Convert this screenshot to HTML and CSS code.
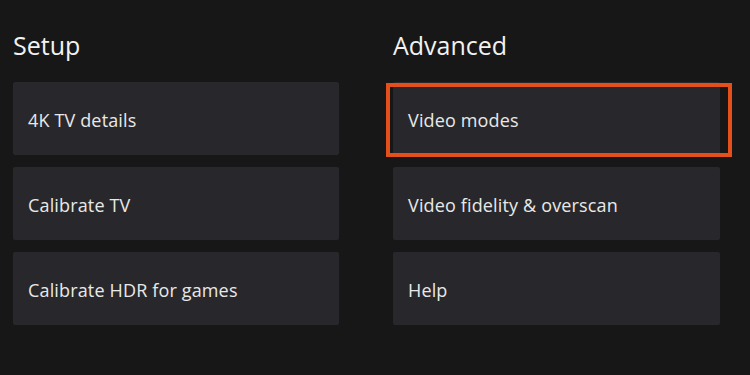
FILE: index.html
```html
<!DOCTYPE html>
<html>
<head>
<meta charset="utf-8">
<link rel="stylesheet" href="styles.css">
</head>
<body>
<main class="settings">
  <section class="column">
    <h2 class="heading">Setup</h2>
    <div class="tiles">
      <div class="tile">4K TV details</div>
      <div class="tile">Calibrate TV</div>
      <div class="tile">Calibrate HDR for games</div>
    </div>
  </section>
  <section class="column">
    <h2 class="heading">Advanced</h2>
    <div class="tiles">
      <div class="tile selected">Video modes<span class="highlight"></span></div>
      <div class="tile">Video fidelity &amp; overscan</div>
      <div class="tile">Help</div>
    </div>
  </section>
</main>
</body>
</html>
```
FILE: styles.css
```css
html, body {
  margin: 0;
  padding: 0;
  background: #171717;
  width: 750px;
  height: 375px;
  overflow: hidden;
}
.settings {
  display: grid;
  grid-template-columns: 326px 327px;
  column-gap: 54px;
  padding: 0 0 0 13px;
  font-family: "Open Sans", "Noto Sans", sans-serif;
  color: #ececec;
}
.heading {
  margin: 0;
  height: 82px;
  box-sizing: border-box;
  padding-top: 28px;
  font-size: 25px;
  line-height: 35px;
  font-weight: 400;
  color: #f2f2f2;
}
.tiles {
  display: flex;
  flex-direction: column;
  gap: 12px;
}
.tile {
  position: relative;
  height: 73px;
  background: #28282c;
  border-radius: 2px;
  display: flex;
  align-items: center;
  padding-left: 15px;
  font-size: 18px;
  letter-spacing: 0.15px;
  color: #e8e8e8;
  padding-top: 2px;
  box-sizing: border-box;
}
.highlight {
  position: absolute;
  left: -7px;
  top: 1px;
  right: -12px;
  bottom: -2px;
  border: 4px solid #e44f1c;
}
```
